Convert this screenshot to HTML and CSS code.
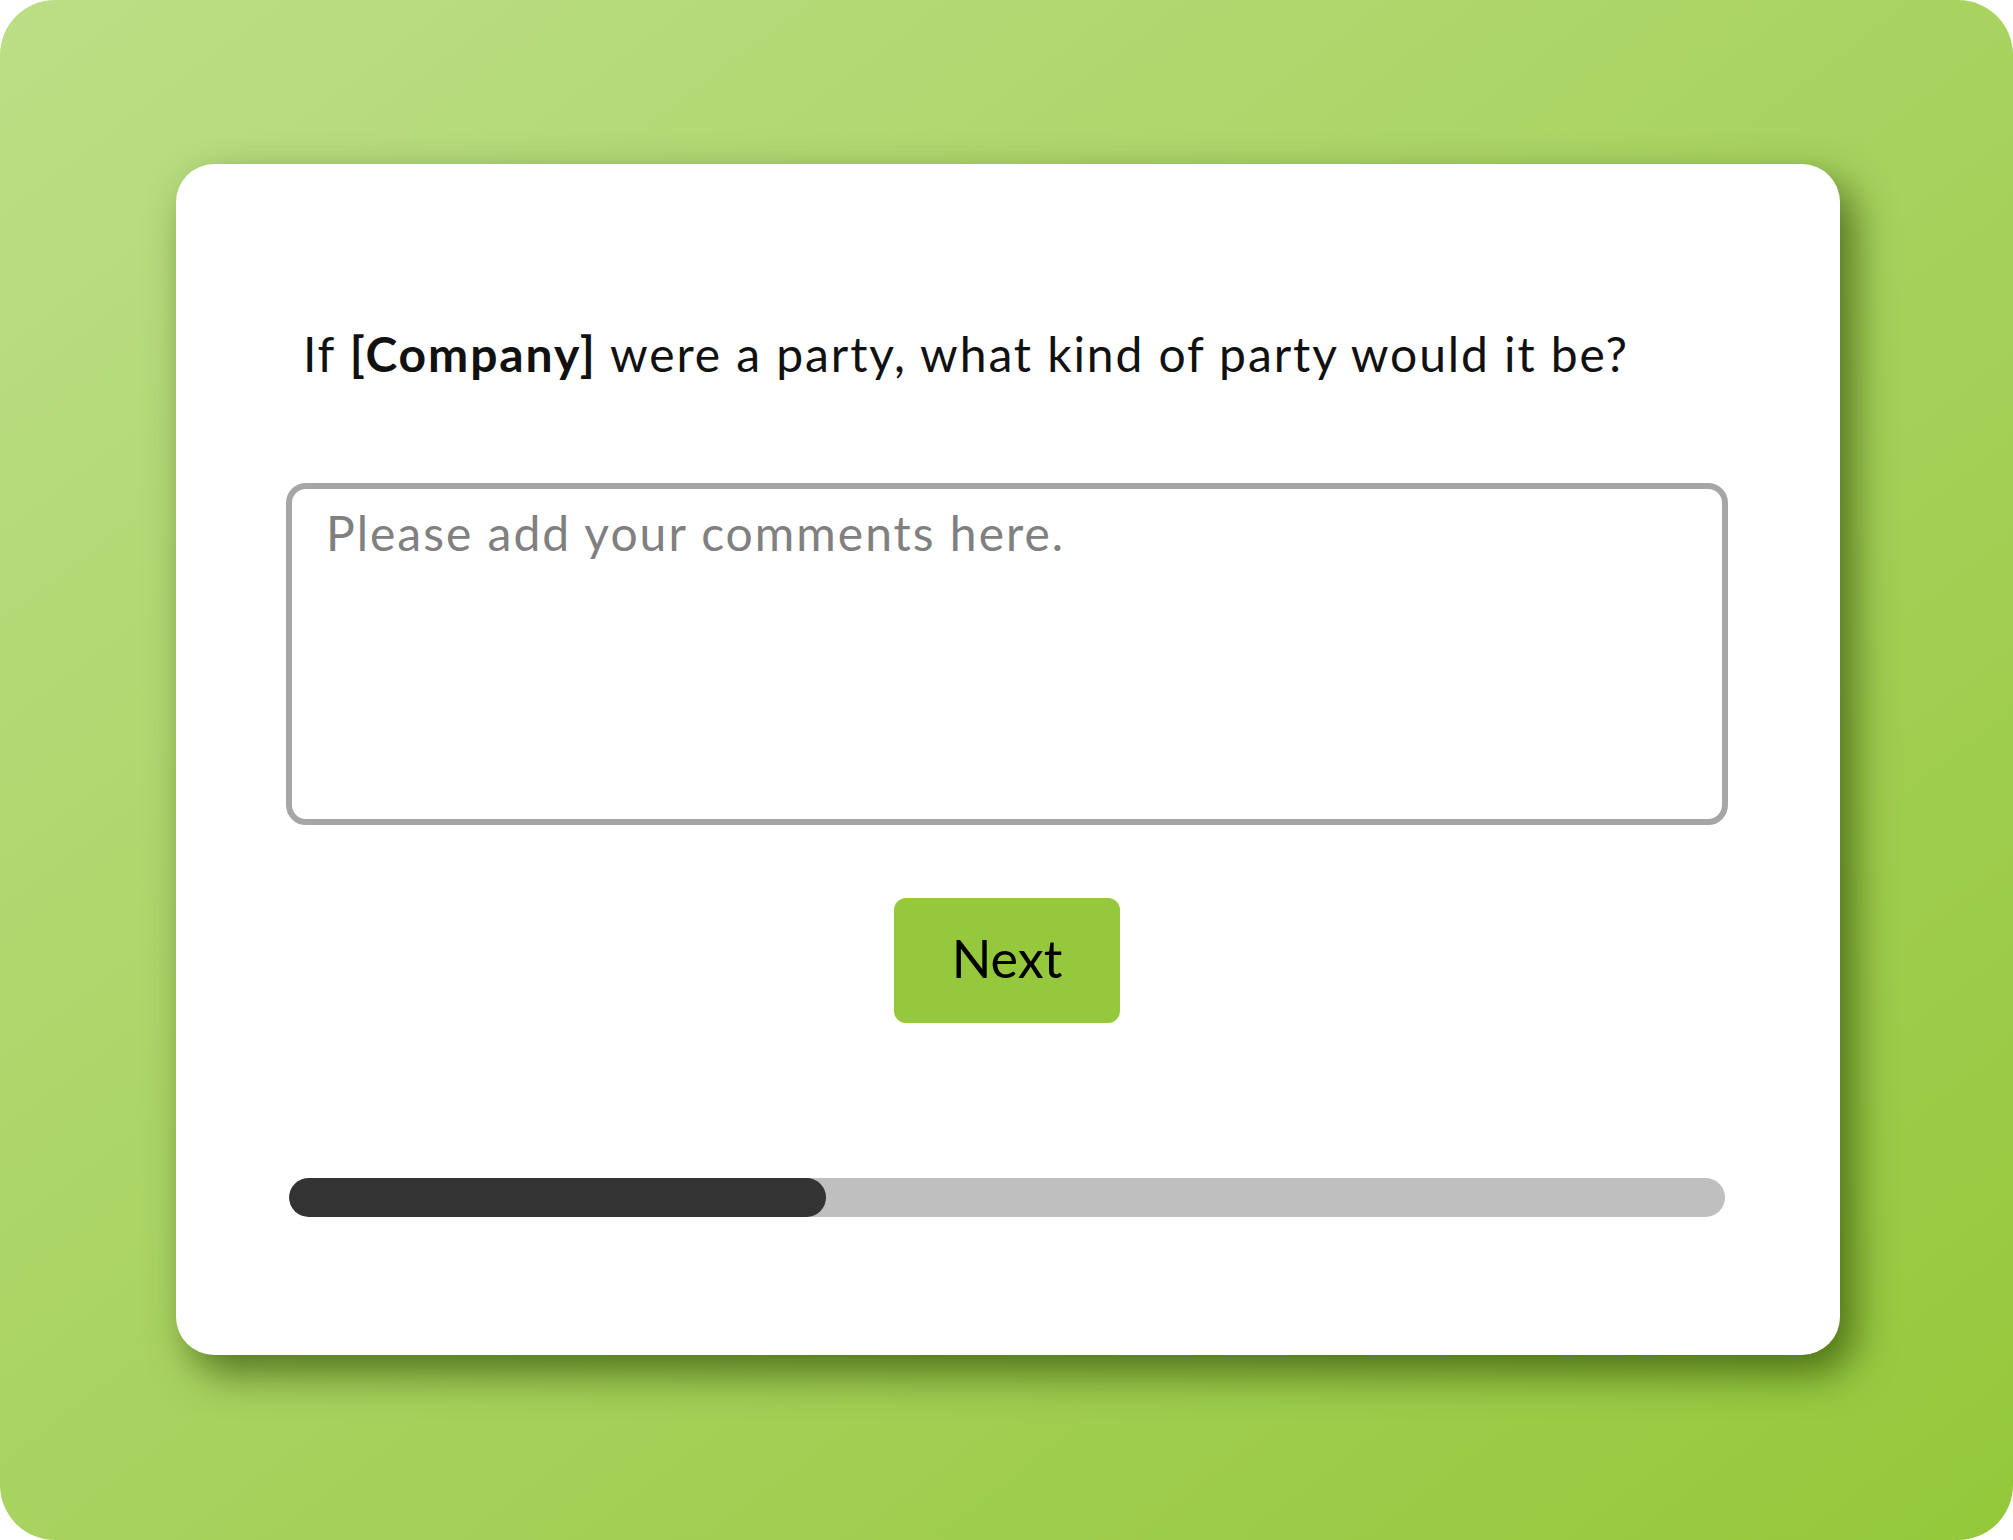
FILE: index.html
```html
<!DOCTYPE html>
<html lang="en">
<head>
    <meta charset="UTF-8">
    <meta name="viewport" content="width=device-width, initial-scale=1.0">
    <title>Survey - Open question</title>
    <link rel="stylesheet" href="styles.css">
</head>
<body>

    <div class="frame">
        <div class="card">
            <p class="question">If <strong>[Company]</strong> were a party, what kind of party would it be?</p>

            <textarea class="comments" placeholder="Please add your comments here."></textarea>

            <div class="actions">
                <button class="next-btn">Next</button>
            </div>

            <div class="progress">
                <div class="progress-fill" style="width: 37.4%"></div>
            </div>
        </div>
    </div>

</body>
</html>
```

FILE: styles.css
```css
body {
    margin: 0;
    background: #ffffff;
    font-family: Lato, "Open Sans", sans-serif;
}

.frame {
    width: 2013px;
    height: 1540px;
    box-sizing: border-box;
    padding: 164px 173px 0 176px;
    border-radius: 55px;
    background: linear-gradient(to bottom right, #bcde86, #94c83a);
}

.card {
    height: 1191px;
    box-sizing: border-box;
    padding: 161px 112px 0 110px;
    background: #ffffff;
    border-radius: 38px;
    box-shadow: 14px 18px 40px rgba(40, 70, 0, 0.68);
}

.question {
    margin: 0 0 0 17px;
    font-size: 48px;
    line-height: 1.2;
    letter-spacing: 1.9px;
    color: #111111;
}

.question strong {
    font-weight: bold;
}

.comments {
    display: block;
    width: 100%;
    height: 342px;
    box-sizing: border-box;
    margin-top: 100px;
    padding: 15px 34px;
    border: 6px solid #a6a6a6;
    border-radius: 20px;
    font-family: Lato, "Open Sans", sans-serif;
    font-size: 48px;
    line-height: 1.2;
    letter-spacing: 2px;
    color: #333333;
    resize: none;
    outline: none;
}

.comments::placeholder {
    color: #808080;
    opacity: 1;
}

.actions {
    display: flex;
    justify-content: center;
    margin-top: 73px;
}

.next-btn {
    width: 226px;
    height: 125px;
    padding: 0 0 4px;
    border: none;
    border-radius: 12px;
    background-color: #95c83c;
    color: #000000;
    font-family: Lato, "Open Sans", sans-serif;
    font-size: 52px;
    cursor: pointer;
}

.progress {
    height: 39px;
    margin: 155px 3px 0 3px;
    border-radius: 20px;
    background: #bfbfbf;
    overflow: hidden;
}

.progress-fill {
    height: 100%;
    border-radius: 20px;
    background: #333333;
}
```
